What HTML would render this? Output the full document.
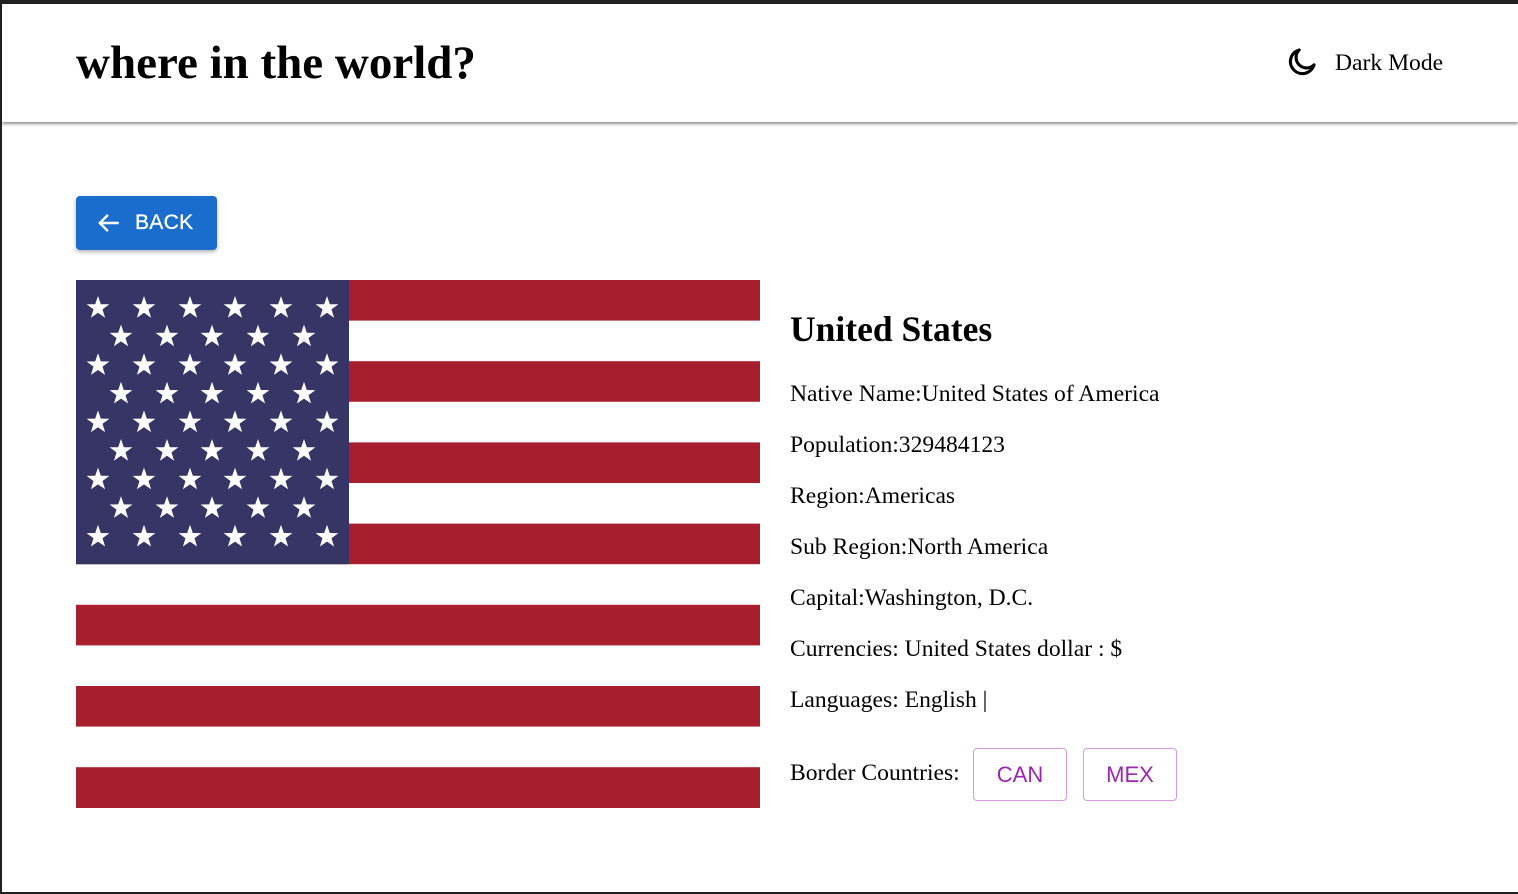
<!DOCTYPE html>
<html><head><meta charset="utf-8"><style>
html,body{margin:0;padding:0}
body{width:1518px;height:894px;position:relative;overflow:hidden;background:#fff;font-family:"Liberation Serif",serif;color:#000}
.frame{position:absolute;left:0;top:0;width:1516px;height:888px;border-top:4px solid #222;border-left:2px solid #222;border-bottom:2px solid #222}
.hdr{position:absolute;left:2px;top:4px;right:0;height:118px;background:#fff;box-shadow:0 2px 3px rgba(0,0,0,.45)}
.t{position:absolute;left:76px;top:36px;font-size:47px;font-weight:bold;white-space:nowrap}
.dm{position:absolute;left:1335px;top:50px;font-size:23.6px;white-space:nowrap}
.moon{position:absolute;left:1285px;top:45px}
.back{position:absolute;left:76px;top:196px;width:141px;height:54px;background:#1a6dcd;border-radius:4px;box-shadow:0 2px 4px rgba(0,0,0,.3);color:#fff;font-family:"Liberation Sans",sans-serif;font-size:21px}
.back span{position:absolute;left:59px;top:15px;letter-spacing:.3px;-webkit-text-stroke:.3px #fff}
.flag{position:absolute;left:76px;top:280px}
h1{position:absolute;left:790px;top:308px;margin:0;font-size:35.5px;font-weight:bold;white-space:nowrap}
.l{position:absolute;left:790px;font-size:23.6px;white-space:nowrap}
.bc{position:absolute;top:748px;height:53px;border:1px solid #d39be0;border-radius:4px;color:#9b27b0;font-family:"Liberation Sans",sans-serif;font-size:22px;text-align:center;line-height:52px;box-sizing:border-box}
</style></head><body>
<div class="frame"></div>
<div class="hdr"></div>
<div class="t">where in the world?</div>
<svg class="moon" width="34" height="34" viewBox="0 0 24 24"><path d="M10 3.5a8.5 8.5 0 1 0 10.5 10.5A7 7 0 0 1 10 3.5z" fill="none" stroke="#000" stroke-width="2.2" stroke-linejoin="round"/></svg>
<div class="dm">Dark Mode</div>
<div class="back"><span>BACK</span></div>
<svg style="position:absolute;left:96px;top:210px" width="26" height="26" viewBox="0 0 24 24"><path d="M21 12H4M11 4.5L3.5 12 11 19.5" fill="none" stroke="#fff" stroke-width="2.2"/></svg>
<svg class="flag" width="684" height="528" viewBox="0 0 684 528">
<defs><polygon id="s" points="0,-12 2.8,-3.8 11.4,-3.7 4.5,1.4 7.1,9.7 0,4.8 -7.1,9.7 -4.5,1.4 -11.4,-3.7 -2.8,-3.8" fill="#fff"/></defs>
<rect width="684" height="528" fill="#fff"/>
<g fill="#a71f2e">
<rect y="0" width="684" height="40.6"/><rect y="81.2" width="684" height="40.6"/><rect y="162.4" width="684" height="40.6"/><rect y="243.6" width="684" height="40.6"/><rect y="324.8" width="684" height="40.6"/><rect y="406" width="684" height="40.6"/><rect y="487.2" width="684" height="40.8"/>
</g>
<rect width="273" height="284.2" fill="#373565"/>
<g id="r1"><use href="#s" x="22" y="28"/><use href="#s" x="68" y="28"/><use href="#s" x="114" y="28"/><use href="#s" x="159" y="28"/><use href="#s" x="205" y="28"/><use href="#s" x="251" y="28"/></g>
<g id="r2"><use href="#s" x="45" y="56.6"/><use href="#s" x="91" y="56.6"/><use href="#s" x="136" y="56.6"/><use href="#s" x="182" y="56.6"/><use href="#s" x="228" y="56.6"/></g>
<use href="#r1" y="57.2"/><use href="#r2" y="57.2"/>
<use href="#r1" y="114.4"/><use href="#r2" y="114.4"/>
<use href="#r1" y="171.6"/><use href="#r2" y="171.6"/>
<use href="#r1" y="228.8"/>
</svg>
<h1>United States</h1>
<div class="l" style="top:381px">Native Name:United States of America</div>
<div class="l" style="top:432px">Population:329484123</div>
<div class="l" style="top:483px">Region:Americas</div>
<div class="l" style="top:534px">Sub Region:North America</div>
<div class="l" style="top:585px">Capital:Washington, D.C.</div>
<div class="l" style="top:636px">Currencies: United States dollar : $</div>
<div class="l" style="top:687px">Languages: English |</div>
<div class="l" style="top:760px">Border Countries:</div>
<div class="bc" style="left:973px;width:94px">CAN</div>
<div class="bc" style="left:1083px;width:94px">MEX</div>
</body></html>
